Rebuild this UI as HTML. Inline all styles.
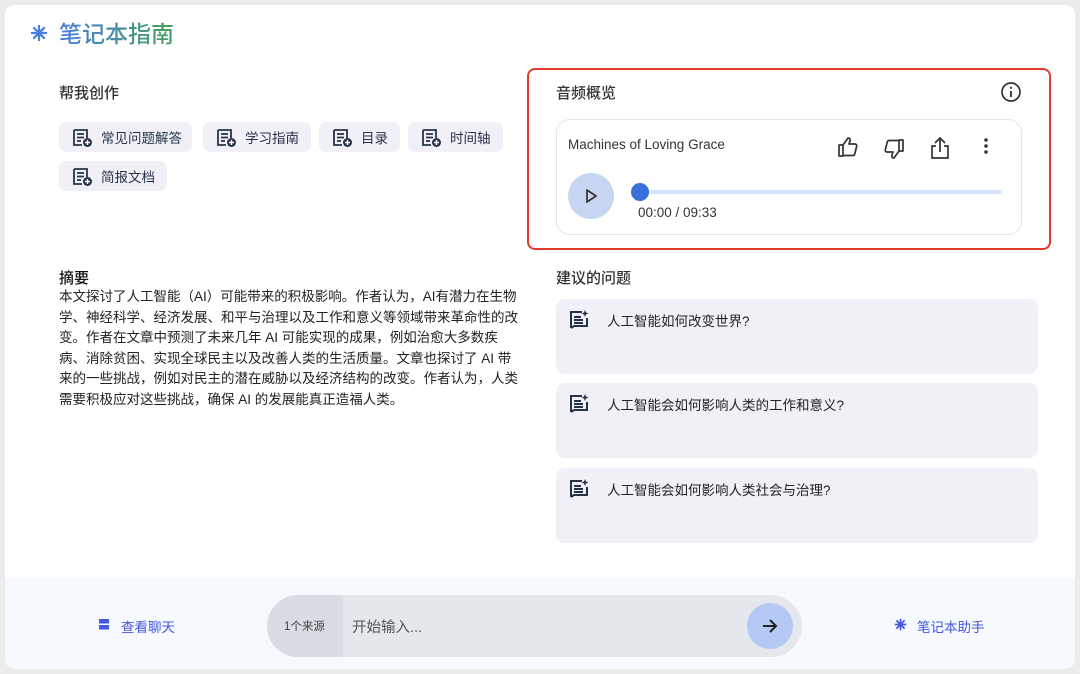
<!DOCTYPE html>
<html><head><meta charset="utf-8"><style>
*{box-sizing:border-box;margin:0;padding:0}
body{width:1080px;height:674px;background:#ececec;font-family:"Liberation Sans","Noto Sans CJK SC",sans-serif;position:relative;overflow:hidden;color:#1f1f1f}
.card{position:absolute;left:5px;top:5px;width:1070px;height:664px;background:#fff;border-radius:10px;overflow:hidden}
.abs{position:absolute}
.title{top:16px;font-size:23px;line-height:26px;font-weight:500;background:linear-gradient(90deg,#4a7ee0,#4aa060);-webkit-background-clip:text;color:transparent}
.h{font-size:15px;font-weight:500;color:#333}
.chip{position:absolute;height:30px;background:#eff1f6;border-radius:7px;font-size:13.5px;color:#27324a;display:flex;align-items:center;padding-left:42px}
.chip svg{position:absolute;left:13px;top:6px}
.sum{left:54px;top:282px;width:463px;font-size:13.5px;line-height:20.5px;color:#222}
.red{left:522px;top:63px;width:524px;height:182px;border:2px solid #e33a2f;border-radius:8px}
.aud{left:551px;top:114px;width:466px;height:116px;border:1px solid #e3e5e8;border-radius:14px}
.q{position:absolute;left:551px;width:482px;height:75px;background:#eff1f6;border-radius:9px;font-size:13.5px;color:#222}
.q span{position:absolute;left:51px;top:11px}
.q svg{position:absolute;left:12px;top:10px}
.bot{left:0;top:573px;width:1070px;height:91px;background:#f6f9fe}
</style></head><body><div class="card">
<svg class="abs" style="left:25px;top:19px" width="18" height="18" viewBox="0 0 18 18"><path d="M9 1v16M1 9h16M3.3 3.3l11.4 11.4M14.7 3.3L3.3 14.7" stroke="#4a7ee0" stroke-width="2.2"/></svg>
<div class="abs title" style="left:54px">笔记本指南</div>
<div class="abs h" style="left:54px;top:77px">帮我创作</div>
<div class="chip" style="left:54px;top:117px;width:133px">常见问题解答<svg width="22" height="20" viewBox="0 0 22 20"><path d="M2 2h13v8M2 2v15h8M5 6h7M5 9.5h7M5 13h4" stroke="#27324a" stroke-width="1.8" fill="none"/><circle cx="15.5" cy="14.5" r="4.5" fill="#27324a"/><path d="M15.5 12v5M13 14.5h5" stroke="#fff" stroke-width="1.4"/></svg></div>
<div class="chip" style="left:198px;top:117px;width:108px">学习指南<svg width="22" height="20" viewBox="0 0 22 20"><path d="M2 2h13v8M2 2v15h8M5 6h7M5 9.5h7M5 13h4" stroke="#27324a" stroke-width="1.8" fill="none"/><circle cx="15.5" cy="14.5" r="4.5" fill="#27324a"/><path d="M15.5 12v5M13 14.5h5" stroke="#fff" stroke-width="1.4"/></svg></div>
<div class="chip" style="left:314px;top:117px;width:81px">目录<svg width="22" height="20" viewBox="0 0 22 20"><path d="M2 2h13v8M2 2v15h8M5 6h7M5 9.5h7M5 13h4" stroke="#27324a" stroke-width="1.8" fill="none"/><circle cx="15.5" cy="14.5" r="4.5" fill="#27324a"/><path d="M15.5 12v5M13 14.5h5" stroke="#fff" stroke-width="1.4"/></svg></div>
<div class="chip" style="left:403px;top:117px;width:95px">时间轴<svg width="22" height="20" viewBox="0 0 22 20"><path d="M2 2h13v8M2 2v15h8M5 6h7M5 9.5h7M5 13h4" stroke="#27324a" stroke-width="1.8" fill="none"/><circle cx="15.5" cy="14.5" r="4.5" fill="#27324a"/><path d="M15.5 12v5M13 14.5h5" stroke="#fff" stroke-width="1.4"/></svg></div>
<div class="chip" style="left:54px;top:156px;width:108px">简报文档<svg width="22" height="20" viewBox="0 0 22 20"><path d="M2 2h13v8M2 2v15h8M5 6h7M5 9.5h7M5 13h4" stroke="#27324a" stroke-width="1.8" fill="none"/><circle cx="15.5" cy="14.5" r="4.5" fill="#27324a"/><path d="M15.5 12v5M13 14.5h5" stroke="#fff" stroke-width="1.4"/></svg></div>
<div class="abs h" style="left:54px;top:262px;color:#111">摘要</div>
<div class="abs sum">本文探讨了人工智能（AI）可能带来的积极影响。作者认为，AI有潜力在生物学、神经科学、经济发展、和平与治理以及工作和意义等领域带来革命性的改变。作者在文章中预测了未来几年 AI 可能实现的成果，例如治愈大多数疾病、消除贫困、实现全球民主以及改善人类的生活质量。文章也探讨了 AI 带来的一些挑战，例如对民主的潜在威胁以及经济结构的改变。作者认为，人类需要积极应对这些挑战，确保 AI 的发展能真正造福人类。</div>
<div class="abs red"></div>
<div class="abs h" style="left:551px;top:77px">音频概览</div>
<svg class="abs" style="left:995px;top:76px" width="22" height="22" viewBox="0 0 22 22"><circle cx="11" cy="11" r="9" stroke="#333" stroke-width="1.7" fill="none"/><path d="M11 10v6" stroke="#333" stroke-width="1.8"/><circle cx="11" cy="6.8" r="1.1" fill="#333"/></svg>
<div class="abs aud"></div>
<div class="abs" style="left:563px;top:132px;font-size:13.5px;color:#333">Machines of Loving Grace</div>
<svg class="abs" style="left:831px;top:130px" width="24" height="24" viewBox="0 0 24 24"><path d="M3 10h4v11H3zM7 10l5-7c2 0 2.5 1.5 2 3l-1 3h6c1.2 0 2 1 1.7 2.2l-2 8c-.3.8-1 1.3-1.8 1.3H7" stroke="#333" stroke-width="1.7" fill="none" stroke-linejoin="round"/></svg>
<svg class="abs" style="left:877px;top:132px" width="24" height="24" viewBox="0 0 24 24"><g transform="rotate(180 12 12)"><path d="M3 10h4v11H3zM7 10l5-7c2 0 2.5 1.5 2 3l-1 3h6c1.2 0 2 1 1.7 2.2l-2 8c-.3.8-1 1.3-1.8 1.3H7" stroke="#333" stroke-width="1.7" fill="none" stroke-linejoin="round"/></g></svg>
<svg class="abs" style="left:924px;top:130px" width="22" height="26" viewBox="0 0 22 26"><path d="M11 3v14M6 8l5-5 5 5M7 11H3v12h16V11h-4" stroke="#333" stroke-width="1.7" fill="none"/></svg>
<svg class="abs" style="left:977px;top:131px" width="8" height="20"><circle cx="4" cy="4" r="1.8" fill="#333"/><circle cx="4" cy="10" r="1.8" fill="#333"/><circle cx="4" cy="16" r="1.8" fill="#333"/></svg>
<div class="abs" style="left:563px;top:168px;width:46px;height:46px;border-radius:50%;background:#c7d5f0"></div>
<svg class="abs" style="left:580px;top:183px" width="14" height="16"><path d="M2 2l9 6-9 6z" stroke="#333" stroke-width="1.7" fill="none" stroke-linejoin="round"/></svg>
<div class="abs" style="left:630px;top:185px;width:367px;height:4px;background:#d6e3fa;border-radius:2px"></div>
<div class="abs" style="left:626px;top:178px;width:18px;height:18px;border-radius:50%;background:#3a72db"></div>
<div class="abs" style="left:633px;top:200px;font-size:13.5px;color:#333">00:00 / 09:33</div>
<div class="abs h" style="left:551px;top:262px">建议的问题</div>
<div class="q" style="top:294px"><svg width="22" height="22" viewBox="0 0 22 22"><path d="M3 19V3h11M3 19l3-2h13V9M6 8h7M6 11h9M6 14h9" stroke="#27324a" stroke-width="2" fill="none"/><path d="M17 1l1 2.5 2.5 1-2.5 1-1 2.5-1-2.5-2.5-1 2.5-1z" fill="#27324a"/></svg><span>人工智能如何改变世界?</span></div>
<div class="q" style="top:378px"><svg width="22" height="22" viewBox="0 0 22 22"><path d="M3 19V3h11M3 19l3-2h13V9M6 8h7M6 11h9M6 14h9" stroke="#27324a" stroke-width="2" fill="none"/><path d="M17 1l1 2.5 2.5 1-2.5 1-1 2.5-1-2.5-2.5-1 2.5-1z" fill="#27324a"/></svg><span>人工智能会如何影响人类的工作和意义?</span></div>
<div class="q" style="top:463px"><svg width="22" height="22" viewBox="0 0 22 22"><path d="M3 19V3h11M3 19l3-2h13V9M6 8h7M6 11h9M6 14h9" stroke="#27324a" stroke-width="2" fill="none"/><path d="M17 1l1 2.5 2.5 1-2.5 1-1 2.5-1-2.5-2.5-1 2.5-1z" fill="#27324a"/></svg><span>人工智能会如何影响人类社会与治理?</span></div>
<div class="abs bot"></div>
<svg class="abs" style="left:93px;top:613px" width="12" height="14"><rect x="1" y="1" width="10" height="4.5" fill="#4557e0"/><rect x="1" y="7" width="10" height="4.5" fill="#4557e0"/></svg>
<div class="abs" style="left:116px;top:611px;font-size:13.5px;color:#4557e0">查看聊天</div>
<div class="abs" style="left:262px;top:590px;width:535px;height:62px;border-radius:31px;background:#e4e7ec;overflow:hidden"><div style="position:absolute;left:0;top:0;width:76px;height:62px;background:#d9dce2"></div><div style="position:absolute;left:17px;top:23px;font-size:11.5px;color:#444">1个来源</div><div style="position:absolute;left:85px;top:21px;font-size:14.5px;color:#555">开始输入...</div><div style="position:absolute;left:480px;top:8px;width:46px;height:46px;border-radius:50%;background:#b5c9f5"></div><svg style="position:absolute;left:494px;top:22px" width="18" height="18"><path d="M2 9h13M9 3l6 6-6 6" stroke="#222" stroke-width="2" fill="none"/></svg></div>
<svg class="abs" style="left:889px;top:613px" width="13" height="13" viewBox="0 0 18 18"><path d="M9 1v16M1 9h16M3.3 3.3l11.4 11.4M14.7 3.3L3.3 14.7" stroke="#4557e0" stroke-width="2.4"/></svg>
<div class="abs" style="left:912px;top:611px;font-size:13.5px;color:#4557e0">笔记本助手</div>
</div></body></html>
